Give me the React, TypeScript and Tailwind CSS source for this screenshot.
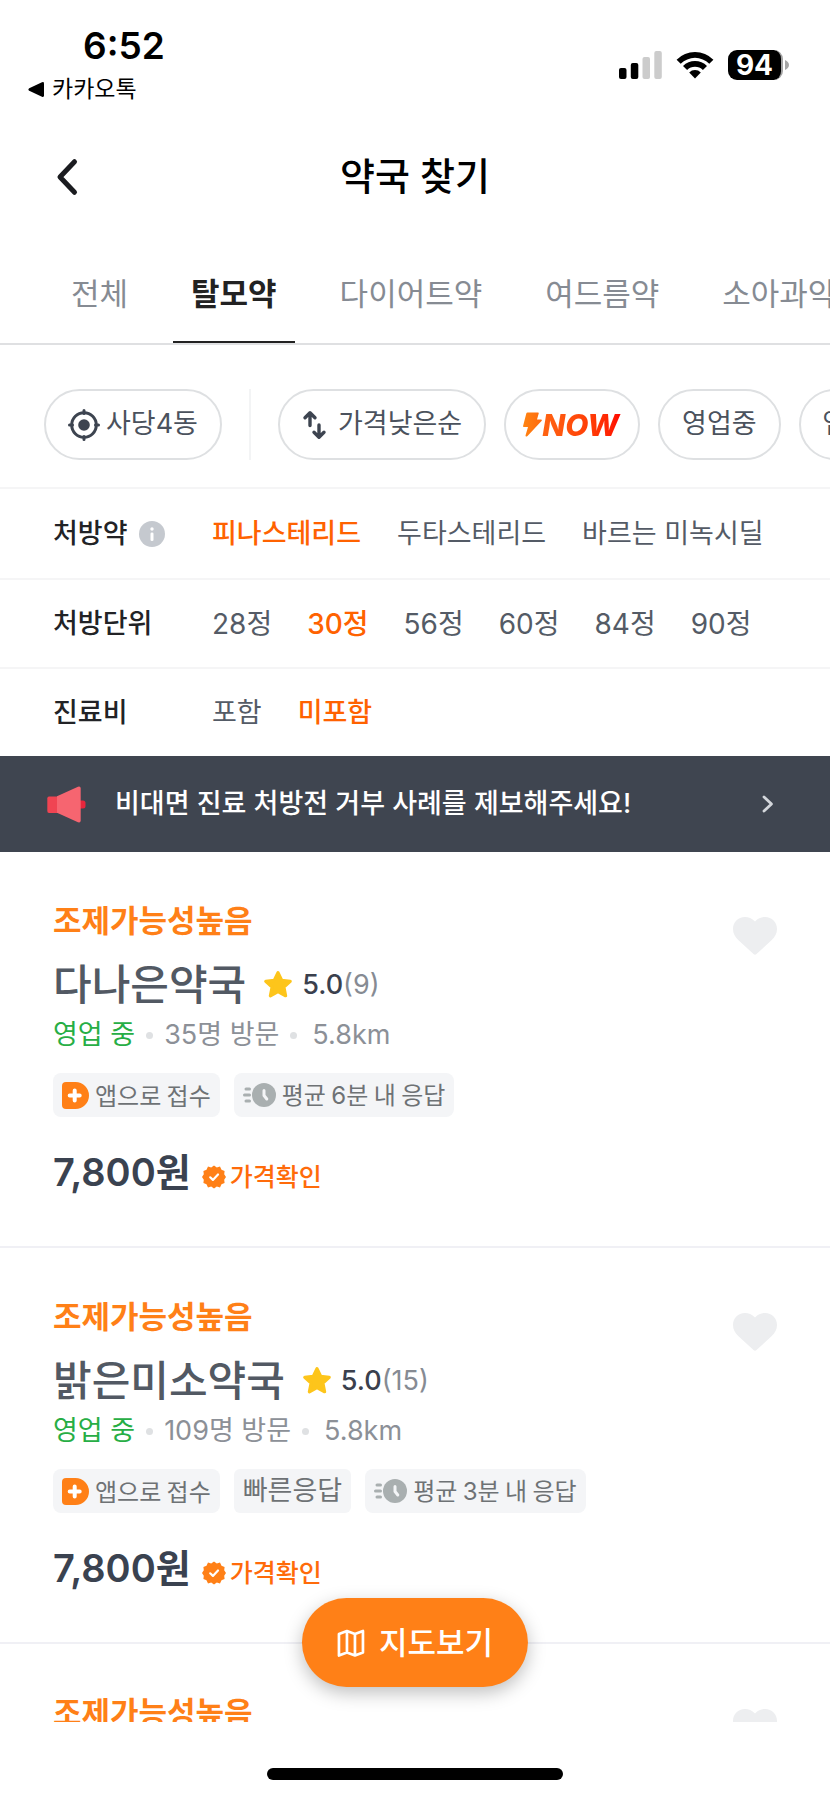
import React from "react";

const TABS = ["전체", "탈모약", "다이어트약", "여드름약", "소아과약"];

type FilterRow = { label: string; info?: boolean; options: string[]; selected: number; optionsClass: string };

const FILTERS: FilterRow[] = [
  {
    label: "처방약",
    info: true,
    options: ["피나스테리드", "두타스테리드", "바르는 미녹시딜"],
    selected: 0,
    optionsClass: "flex gap-[36px]",
  },
  {
    label: "처방단위",
    options: ["28정", "30정", "56정", "60정", "84정", "90정"],
    selected: 1,
    optionsClass: "flex gap-[35px] text-[28px]",
  },
  { label: "진료비", options: ["포함", "미포함"], selected: 1, optionsClass: "flex gap-[36px]" },
];

type Pharmacy = { name: string; reviews: number; visits: number; fast: boolean; minutes: number };

const PHARMACIES: Pharmacy[] = [
  { name: "다나은약국", reviews: 9, visits: 35, fast: false, minutes: 6 },
  { name: "밝은미소약국", reviews: 15, visits: 109, fast: true, minutes: 3 },
];

function StatusBar() {
  return (
    <div className="flex h-[112px] shrink-0 items-start justify-between pl-7 pr-[41px]">
      <div className="pt-[26px]">
        <div className="pl-[55px] text-[37px] font-semibold leading-[40px] text-black">6:52</div>
        <a href="#back" className="flex items-center gap-[7px] text-[23px] leading-[46px] text-black">
          <svg width="17" height="17" viewBox="0 0 17 17" aria-hidden="true">
            <path d="M1.2 7.2 14 1.2Q16 .5 16 2.4V14.600Q16 16.500 14 15.800L1.200 9.800Q-.4 8.500 1.200 7.200Z" fill="#000" />
          </svg>
          카카오톡
        </a>
      </div>
      <div className="flex items-center gap-[14px] pt-[50px]">
        <svg width="43" height="28" viewBox="0 0 43 28" aria-hidden="true">
          <rect x="0" y="17" width="7.500" height="11" rx="2" />
          <rect x="11.800" y="12" width="7.500" height="16" rx="2" />
          <rect x="23.500" y="6" width="7.500" height="22" rx="2" fill="#ccc" />
          <rect x="35.300" y="0" width="7.500" height="28" rx="2" fill="#ccc" />
        </svg>
        <svg width="38" height="28" viewBox="0 0 38 28" aria-hidden="true">
          <path d="M0.600 8.700A26 26 0 0 1 37.400 8.700L33.300 12.800A20.200 20.200 0 0 0 4.700 12.800Z" />
          <path d="M7 15A17 17 0 0 1 31 15L26.900 19.100A11.200 11.200 0 0 0 11.100 19.100Z" />
          <path d="M13.200 21.400A8.200 8.200 0 0 1 24.800 21.400L19 27.500Z" />
        </svg>
        <div className="flex items-center gap-[2px]">
          <div className="flex h-[30px] w-[55px] items-center justify-center rounded-[9px] border-r-2 border-[#a5a5a5] bg-black text-[28px] font-bold leading-[30px] text-white">
            94
          </div>
          <svg width="4" height="10" viewBox="0 0 4 10" aria-hidden="true">
            <path d="M0 0Q4 2 4 5T0 10Z" fill="#a5a5a5" />
          </svg>
        </div>
      </div>
    </div>
  );
}

function Header() {
  return (
    <header className="grid h-[130px] shrink-0 grid-cols-[1fr_auto_1fr] items-center px-[47px]">
      <button type="button" aria-label="뒤로" className="w-[40px]">
        <svg width="36" height="40" viewBox="0 0 36 40" fill="none" stroke="#1b1c20" strokeWidth="5" strokeLinecap="round" strokeLinejoin="round" aria-hidden="true">
          <path d="M27.500 4.700 13 20 27.500 35.300" />
        </svg>
      </button>
      <h1 className="pb-[2px] text-[38px] font-medium leading-[48px] text-black">약국 찾기</h1>
    </header>
  );
}

function Tabs() {
  return (
    <nav className="flex h-[103px] shrink-0 gap-[27px] overflow-hidden border-b-2 border-[#dfe0e2] pl-[53px] text-[31px] leading-[40px]">
      {TABS.map((tab, i) => (
        <a
          key={tab}
          href={"#tab-" + i}
          className={
            i === 1
              ? "flex shrink-0 items-center border-b-2 border-[#222] px-[18px] pt-[4px] font-semibold text-[#222]"
              : "flex shrink-0 items-center border-b-2 border-transparent px-[18px] pt-[4px] text-[#868b93]"
          }
        >
          {tab}
        </a>
      ))}
    </nav>
  );
}

function Chip({ children, tight }: { children: React.ReactNode; tight?: boolean }) {
  return (
    <button
      type="button"
      className={
        tight
          ? "flex h-[71px] shrink-0 items-center rounded-full border-2 border-[#dee0e2] px-[17px]"
          : "flex h-[71px] shrink-0 items-center rounded-full border-2 border-[#dee0e2] px-[22px] text-[27px] text-[#4b525d]"
      }
    >
      {children}
    </button>
  );
}

function Chips() {
  return (
    <div className="flex h-[142px] shrink-0 items-start overflow-hidden pl-[44px] pt-[44px]">
      <Chip>
        <svg className="mr-[6px]" width="32" height="32" viewBox="0 0 32 32" fill="none" stroke="#3d4450" strokeWidth="3" strokeLinecap="round" aria-hidden="true">
          <circle cx="16" cy="16" r="12.300" />
          <circle cx="16" cy="16" r="5.800" fill="#3d4450" stroke="none" />
          <path d="M16 1.500v3M16 27.500v3M1.500 16h3M27.500 16h3" />
        </svg>
        사당4동
      </Chip>
      <div className="mx-[27px] h-[71px] w-[2px] shrink-0 bg-[#f3f4f5]" />
      <div className="flex gap-[18px]">
        <Chip>
          <svg className="mr-[10px]" width="26" height="30" viewBox="0 0 26 30" fill="none" stroke="#3d4450" strokeWidth="3.400" strokeLinecap="round" strokeLinejoin="round" aria-hidden="true">
            <path d="M8 15.500V3M3 7.800 8 2.800 13 7.800M17 15v12M12 22.300l5 5 5-5" />
          </svg>
          가격낮은순
        </Chip>
        <Chip tight>
          <svg width="19" height="25" viewBox="0 0 19 25" aria-hidden="true">
            <defs>
              <linearGradient id="bolt" x1="0" x2="1">
                <stop stopColor="#ff8412" />
                <stop offset="1" stopColor="#ff6a0e" />
              </linearGradient>
            </defs>
            <path d="M4.500.5H15Q16 .5 15.700 1.500L14 7.500H18Q19.500 7.500 18.500 9L4.500 24Q2.500 25.300 2.500 23.500L5 15H1Q-.2 15 .2 13.500L3.300 1.500Q3.600.5 4.500.5Z" fill="url(#bolt)" />
          </svg>
          <span className="bg-gradient-to-r from-[#ff6412] to-[#ff0000] bg-clip-text pr-[2px] text-[30px] font-extrabold italic leading-[40px] text-transparent">
            NOW
          </span>
        </Chip>
        <Chip>영업중</Chip>
        <Chip>앱접수</Chip>
      </div>
    </div>
  );
}

function InfoIcon() {
  return (
    <svg width="26" height="26" viewBox="0 0 26 26" aria-hidden="true">
      <circle cx="13" cy="13" r="13" fill="#c5c9cf" />
      <circle cx="13" cy="8" r="1.700" fill="#fff" />
      <rect x="11.500" y="11.500" width="3" height="8.500" rx="1.300" fill="#fff" />
    </svg>
  );
}

function Filters() {
  return (
    <div className="flex shrink-0 flex-col">
      {FILTERS.map((row) => (
        <div
          key={row.label}
          className="flex h-[89px] items-center border-t-2 border-[#f5f5f6] pl-[53px] text-[27px] leading-[34px] first:h-[91px]"
        >
          <div className="flex w-[159px] shrink-0 items-center gap-[11px] font-medium text-[#222326]">
            {row.label}
            {row.info && <InfoIcon />}
          </div>
          <div className={row.optionsClass}>
            {row.options.map((option, i) => (
              <button
                key={option}
                type="button"
                className={i === row.selected ? "shrink-0 font-medium text-[#ff6200]" : "shrink-0 text-[#545b66]"}
              >
                {option}
              </button>
            ))}
          </div>
        </div>
      ))}
    </div>
  );
}

function Banner() {
  return (
    <a href="#report" className="flex h-[96px] shrink-0 items-center bg-[#3f4550] pl-[47px] pr-[53px] text-[27px] font-medium leading-[34px] text-white">
      <svg className="mr-[29px]" width="39" height="37" viewBox="0 0 39 37" aria-hidden="true">
        <rect x="31" y="14.500" width="7.500" height="8" rx="2.500" fill="#e8263c" />
        <path d="M2 10.500H11V27H2Q.3 27 .3 25V12.500Q.3 10.500 2 10.500Z" fill="#f04452" />
        <path d="M10 10.200 31 .7Q33.700 0 33.700 2.500V34.500Q33.700 37 31 36.300L10 26.800Z" fill="#f66570" />
      </svg>
      <span className="flex-1">비대면 진료 처방전 거부 사례를 제보해주세요!</span>
      <svg width="20" height="20" viewBox="0 0 20 20" fill="none" stroke="#d3d6db" strokeWidth="2.800" strokeLinecap="round" strokeLinejoin="round" aria-hidden="true">
        <path d="M7 3l7.500 7L7 17" />
      </svg>
    </a>
  );
}

function IconTag({ children }: { children: React.ReactNode }) {
  return (
    <span className="flex h-[44px] items-center gap-[6px] rounded-lg bg-[#f4f5f7] px-[9px] font-['Noto_Sans_CJK_KR',sans-serif] text-[24px] leading-[32px] text-[#6e7275]">
      {children}
    </span>
  );
}

function Dot() {
  return <span className="size-[7px] rounded-full bg-[#dfe1e3]" />;
}

function Details({ name, reviews, visits, fast, minutes }: Pharmacy) {
  return (
    <>
      <div className="mt-[14px] flex items-center">
        <h2 className="text-[42px] font-medium leading-[60px] text-[#525963]">{name}</h2>
        <svg className="ml-[17px] mr-[9px]" width="30" height="30" viewBox="0 0 28 28" aria-hidden="true">
          <path d="M14 2.500 17.400 9.600 25.400 10.600 19.500 16 21.100 24 14 20.200 6.900 24 8.500 16 2.600 10.600 10.600 9.600Z" fill="#fdc51b" stroke="#fdc51b" strokeWidth="3" strokeLinejoin="round" />
        </svg>
        <p className="text-[27px] leading-[40px] text-[#868b93]">
          <span className="font-medium text-[#3a404d]">5.0</span>({reviews})
        </p>
      </div>
      <div className="mt-[1px] flex items-center gap-[11px] text-[27px] leading-[38px] text-[#8c9097]">
        <span className="text-[#27ae45]">영업 중</span>
        <Dot />
        <span>{visits}명 방문</span>
        <Dot />
        <span className="pl-1">5.8km</span>
      </div>
      <div className="mt-[19px] flex gap-[14px]">
        <IconTag>
          <svg width="27" height="27" viewBox="0 0 27 27" aria-hidden="true">
            <path d="M4 0H13.500A13.500 13.500 0 0 1 13.500 27H4Q0 27 0 23V4Q0 0 4 0Z" fill="#ff8017" />
            <path d="M12.700 8.500v10M7.700 13.500h10" stroke="#fff" strokeWidth="4" strokeLinecap="round" />
          </svg>
          앱으로 접수
        </IconTag>
        {fast && (
          <span className="flex h-[44px] items-center rounded-md bg-[#f4f5f7] px-[9px] text-[27px] leading-[32px] text-[#6e7275]">
            빠른응답
          </span>
        )}
        <IconTag>
          <svg width="33" height="24" viewBox="0 0 33 24" aria-hidden="true">
            <circle cx="21" cy="12" r="12" fill="#a9afb0" />
            <path d="M3 6h3.500M1.500 12h5M3 18h3.500" stroke="#a9afb0" strokeWidth="3" strokeLinecap="round" />
            <path d="M21 7.500v5l2.800 3.500" fill="none" stroke="#f4f5f7" strokeWidth="3" strokeLinecap="round" strokeLinejoin="round" />
          </svg>
          <span>
            평균 <span className="font-['Inter',sans-serif]">{minutes}</span>분 내 응답
          </span>
        </IconTag>
      </div>
      <div className="mt-[31px] flex items-center">
        <strong className="text-[38px] font-semibold leading-[48px] text-[#3a4250]">7,800원</strong>
        <span className="flex items-center gap-[4px] pl-[11px] pt-[10px] text-[25px] font-medium leading-[32px] text-[#ff6b0a]">
          <svg width="24" height="24" viewBox="0 0 24 24" aria-hidden="true">
            <path d="M12 .5 14.800 2.500 18 1.600 19.500 4.700 22.600 6 22.200 9.300 24 12 22.200 14.800 22.600 18 19.500 19.300 18 22.400 14.800 21.500 12 23.500 9.200 21.500 6 22.400 4.500 19.300 1.400 18 1.800 14.800 0 12 1.800 9.300 1.400 6 4.500 4.700 6 1.600 9.200 2.500Z" fill="#ff8017" />
            <path d="M8.200 12.300 10.900 14.900 16 9.500" fill="none" stroke="#fff" strokeWidth="2.200" strokeLinecap="round" strokeLinejoin="round" />
          </svg>
          가격확인
        </span>
      </div>
    </>
  );
}

function Card({ pharmacy }: { pharmacy?: Pharmacy }) {
  return (
    <article className="flex h-[396px] shrink-0 items-start justify-between border-b-2 border-[#f0f0f5] px-[53px] pt-[49px]">
      <div>
        <p className="text-[31px] font-semibold leading-[40px] text-[#ff8017]">조제가능성높음</p>
        {pharmacy && <Details {...pharmacy} />}
      </div>
      <button type="button" aria-label="찜하기" className="mt-[16px]">
        <svg width="44" height="38" viewBox="0 0 44 38" aria-hidden="true">
          <path d="M22 4.500C19 1.300 15.500 0 12 0 5 0 0 5.300 0 12 0 16.500 2 20 5.500 23.300L20.500 37Q22 38.300 23.500 37L38.500 23.300C42 20 44 16.500 44 12 44 5.300 39 0 32 0 28.500 0 25 1.300 22 4.500Z" fill="#edeef0" />
        </svg>
      </button>
    </article>
  );
}

export default function App() {
  return (
    <div className="flex h-screen w-full flex-col overflow-hidden bg-white font-['Inter','Noto_Sans_CJK_KR',sans-serif]">
      <StatusBar />
      <Header />
      <Tabs />
      <Chips />
      <Filters />
      <Banner />
      <main className="relative min-h-0 flex-1">
        <div className="flex h-full flex-col overflow-hidden">
          {PHARMACIES.map((p) => (
            <Card key={p.name} pharmacy={p} />
          ))}
          <Card />
        </div>
        <button
          type="button"
          className="absolute bottom-[35px] left-1/2 flex h-[89px] -translate-x-1/2 items-center gap-[14px] whitespace-nowrap rounded-full bg-[#ff8017] px-[35px] text-[31px] font-medium leading-[40px] text-white shadow-[0_6px_18px_rgba(0,0,0,0.25)]"
        >
          <svg width="28" height="28" viewBox="0 0 28 28" fill="none" stroke="#fff" strokeWidth="2.700" strokeLinejoin="round" aria-hidden="true">
            <path d="M2 5 10 2 18 5 26 2V23.500L18 26.500 10 23.500 2 26.500ZM10 2V23.500M18 5V26.500" />
          </svg>
          지도보기
        </button>
      </main>
      <div className="flex h-[75px] shrink-0 justify-center pt-[46px]">
        <div className="h-[12px] w-[296px] rounded-full bg-black" />
      </div>
    </div>
  );
}
